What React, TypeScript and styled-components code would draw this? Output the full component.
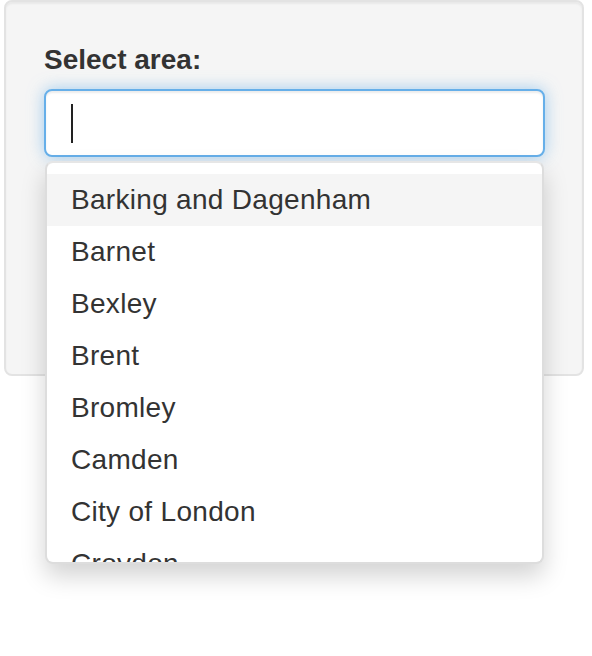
import { createGlobalStyle } from "styled-components";
import styled from "styled-components";

const GlobalStyle = createGlobalStyle`
    html, body {
        margin: 0;
        padding: 0;
        background: #ffffff;
    }
    body {
        font-family: "Liberation Sans", Arial, sans-serif;
        color: #333333;
    }
`

const Page = styled.div`
    width: 592px;
    height: 656px;
    padding: 0 8px 0 4px;
    box-sizing: border-box;
`

const Well = styled.div`
    height: 376px;
    box-sizing: border-box;
    padding: 38px 37px 38px 38px;
    background-color: #f5f5f5;
    border: 2px solid #e3e3e3;
    border-radius: 8px;
    box-shadow: inset 0 2px 2px rgba(0, 0, 0, 0.05);
`

const FormGroup = styled.div`
    display: flex;
    flex-direction: column;
`

const Label = styled.label`
    font-size: 28px;
    font-weight: bold;
    line-height: 40px;
    margin-bottom: 9px;
    color: #333333;
`

const Control = styled.div`
    position: relative;
`

const InputBox = styled.div<{ $focused?: boolean }>`
    height: 68px;
    box-sizing: border-box;
    display: flex;
    align-items: center;
    padding: 0 24px;
    background: #ffffff;
    border: 2px solid ${(p) => (p.$focused ? "#66afe9" : "#cccccc")};
    border-radius: 8px;
    box-shadow: ${(p) =>
        p.$focused
            ? "inset 0 2px 2px rgba(0,0,0,.075), 0 0 16px rgba(102,175,233,.6)"
            : "inset 0 2px 2px rgba(0,0,0,.075)"};
`

const Caret = styled.span`
    display: block;
    width: 2px;
    height: 39px;
    margin-left: 1px;
    background: #222222;
`

// the open selectize menu, lying over the well below the input
const Dropdown = styled.div`
    position: absolute;
    top: 72px;
    left: 1px;
    right: 1px;
    box-sizing: border-box;
    background: #ffffff;
    border: 2px solid #dddddd;
    border-top-color: #e6e6e6;
    border-radius: 8px;
    box-shadow: 0 12px 24px rgba(0, 0, 0, 0.175);
    overflow: hidden;
    z-index: 10;
`

const DropdownContent = styled.div`
    height: 399px;
    padding-top: 11px;
    box-sizing: border-box;
    overflow: hidden;
`

const Option = styled.div<{ $active?: boolean }>`
    height: 52px;
    box-sizing: border-box;
    padding: 6px 24px;
    font-size: 28px;
    line-height: 40px;
    letter-spacing: 0.3px;
    color: #333333;
    white-space: nowrap;
    background: ${(p) => (p.$active ? "#f5f5f5" : "transparent")};
`

const areas = [
    "Barking and Dagenham",
    "Barnet",
    "Bexley",
    "Brent",
    "Bromley",
    "Camden",
    "City of London",
    "Croydon",
    "Ealing",
]

export default function App() {
    return (
        <Page>
            <GlobalStyle />
            <Well>
                <FormGroup>
                    <Label>Select area:</Label>
                    <Control>
                        <InputBox $focused>
                            <Caret />
                        </InputBox>
                        <Dropdown>
                            <DropdownContent>
                                {areas.map((a, i) => (
                                    <Option key={a} $active={i === 0}>{a}</Option>
                                ))}
                            </DropdownContent>
                        </Dropdown>
                    </Control>
                </FormGroup>
            </Well>
        </Page>
    )
}
